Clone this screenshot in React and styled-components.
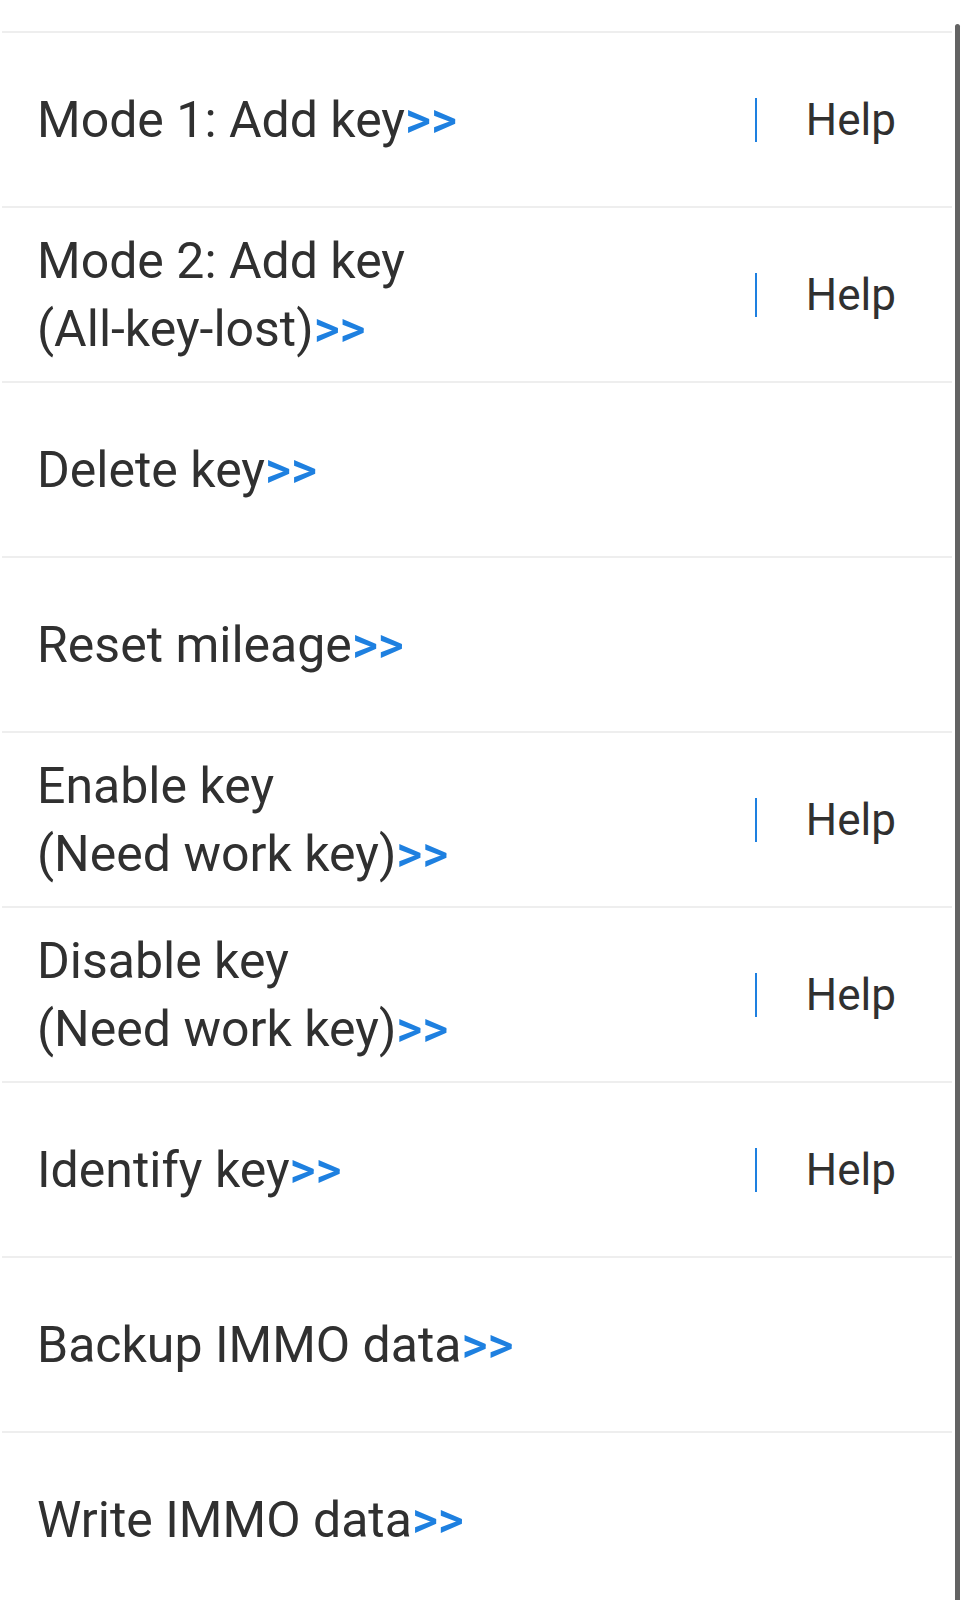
import React from 'react';
import styled, { createGlobalStyle } from 'styled-components';

const GlobalStyle = createGlobalStyle`
  html, body {
    margin: 0;
    padding: 0;
    background: #ffffff;
    overflow: hidden;
  }
  body {
    font-family: Roboto, "Noto Sans", "Liberation Sans", sans-serif;
  }
`;

const Screen = styled.div`
  position: relative;
  width: 965px;
  height: 1600px;
  overflow: hidden;
  background: #ffffff;
  padding-top: 31px;
  box-sizing: border-box;
`;

const List = styled.div`
  width: 950px;
  margin-left: 2px;
  display: flex;
  flex-direction: column;
`;

const Row = styled.div`
  height: 175px;
  flex-shrink: 0;
  box-sizing: border-box;
  border-top: 2px solid #eeeeee;
  display: flex;
  align-items: center;
  padding: 0 56px 0 35px;
`;

const Label = styled.div`
  flex: 1;
  font-size: 50px;
  line-height: 68px;
  color: #303030;
`;

const Arrow = styled.span`
  color: #1e80e0;
  font-weight: 500;
`;

const Aside = styled.div`
  display: flex;
  align-items: center;
  gap: 49px;
`;

const Divider = styled.span`
  display: block;
  width: 2px;
  height: 44px;
  background: #1e80e0;
`;

const HelpLink = styled.span`
  font-size: 44px;
  line-height: 52px;
  color: #303030;
`;

const ScrollThumb = styled.div`
  position: absolute;
  top: 24px;
  left: 955px;
  width: 5px;
  bottom: -10px;
  border-radius: 3px;
  background: #636363;
`;

const items = [
  { lines: ['Mode 1: Add key'], help: true },
  { lines: ['Mode 2: Add key', '(All-key-lost)'], help: true },
  { lines: ['Delete key'] },
  { lines: ['Reset mileage'] },
  { lines: ['Enable key', '(Need work key)'], help: true },
  { lines: ['Disable key', '(Need work key)'], help: true },
  { lines: ['Identify key'], help: true },
  { lines: ['Backup IMMO data'] },
  { lines: ['Write IMMO data'] },
];

export default function App() {
  return (
    <>
      <GlobalStyle />
      <Screen>
        <List>
          {items.map((item, i) => (
            <Row key={i}>
              <Label>
                {item.lines.map((line, j) => (
                  <React.Fragment key={j}>
                    {j > 0 && <br />}
                    {line}
                    {j === item.lines.length - 1 && <Arrow>&gt;&gt;</Arrow>}
                  </React.Fragment>
                ))}
              </Label>
              {item.help && (
                <Aside>
                  <Divider />
                  <HelpLink>Help</HelpLink>
                </Aside>
              )}
            </Row>
          ))}
        </List>
        <ScrollThumb />
      </Screen>
    </>
  );
}
